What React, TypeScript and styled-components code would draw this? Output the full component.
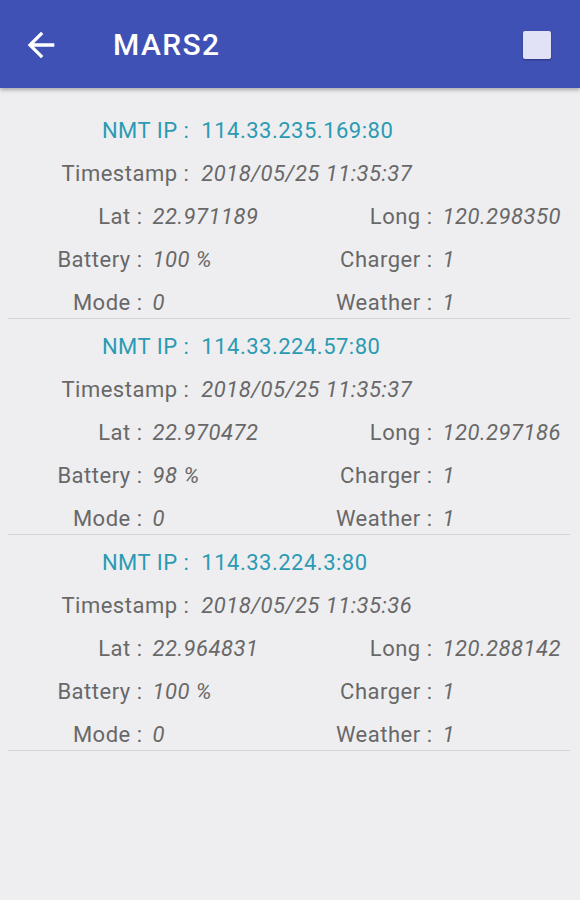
import React, { FC } from 'react';
import styled, { createGlobalStyle } from 'styled-components';

const BLUE = '#3f51b5';
const TEAL = '#2a9bb3';
const GREY = '#686868';

const GlobalStyle = createGlobalStyle`
  html, body {
    margin: 0;
    padding: 0;
    background-color: #eeeef0;
  }
  * {
    box-sizing: border-box;
    font-family: Roboto, "Noto Sans", sans-serif;
  }
`;

const Page = styled.div`
  width: 580px;
  min-height: 900px;
  background-color: #eeeef0;
`;

const Toolbar = styled.header`
  height: 88px;
  background-color: ${BLUE};
  display: flex;
  align-items: center;
  padding: 0 29px 0 21px;
  box-shadow: 0 2px 4px rgba(0, 0, 0, 0.3);
`;

const BackButton = styled.button`
  border: none;
  background: none;
  padding: 0;
  width: 40px;
  height: 40px;
  display: flex;
  margin-top: 2px;
  cursor: pointer;
`;

const Title = styled.h1`
  flex-grow: 1;
  margin: 0 0 0 52px;
  color: #fff;
  font-size: 30px;
  font-weight: 500;
  letter-spacing: 1.4px;
`;

const StopIcon = styled.div`
  width: 28px;
  height: 28px;
  border-radius: 2px;
  background-color: #e2e2f6;
  box-shadow: 0 1px 2px rgba(0, 0, 0, 0.35);
  margin-top: 2px;
`;

const List = styled.main`
  padding-top: 15px;
`;

const Card = styled.section`
  padding-top: 11px;
  margin: 0 10px 0 8px;
  border-bottom: 1px solid #d6d6d8;
  display: flex;
  flex-direction: column;
  gap: 11px;
`;

const Row = styled.div`
  height: 32px;
  display: flex;
  align-items: center;
  margin: 0 -10px 0 -8px;
`;

const Field = styled.div<{ $half?: boolean }>`
  flex: 1;
  display: flex;
  align-items: center;
  padding-left: ${(p) => (p.$half ? 5 : 0)}px;
  font-size: 22px;
  letter-spacing: 0.5px;
  & > span:first-child {
    flex: 1;
    padding-right: ${(p) => (p.$half ? 0 : 3)}px;
  }
  & > span:last-child {
    flex: ${(p) => (p.$half ? 1 : 2)};
    padding-left: ${(p) => (p.$half ? 10 : 9)}px;
  }
`;

const Label = styled.span<{ $accent?: boolean }>`
  text-align: right;
  color: ${(p) => (p.$accent ? TEAL : GREY)};
  white-space: nowrap;
`;

const Value = styled.span<{ $accent?: boolean }>`
  color: ${(p) => (p.$accent ? TEAL : GREY)};
  font-style: ${(p) => (p.$accent ? 'normal' : 'italic')};
  white-space: nowrap;
`;

type Record = {
  ip: string;
  timestamp: string;
  lat: string;
  long: string;
  battery: string;
  charger: string;
  mode: string;
  weather: string;
};

const records: Record[] = [
  {
    ip: '114.33.235.169:80',
    timestamp: '2018/05/25 11:35:37',
    lat: '22.971189',
    long: '120.298350',
    battery: '100 %',
    charger: '1',
    mode: '0',
    weather: '1',
  },
  {
    ip: '114.33.224.57:80',
    timestamp: '2018/05/25 11:35:37',
    lat: '22.970472',
    long: '120.297186',
    battery: '98 %',
    charger: '1',
    mode: '0',
    weather: '1',
  },
  {
    ip: '114.33.224.3:80',
    timestamp: '2018/05/25 11:35:36',
    lat: '22.964831',
    long: '120.288142',
    battery: '100 %',
    charger: '1',
    mode: '0',
    weather: '1',
  },
];

const Pair: FC<{ label: string; value: string }> = ({ label, value }) => (
  <Field $half>
    <Label>{label} :</Label>
    <Value>{value}</Value>
  </Field>
);

const RecordCard: FC<{ record: Record }> = ({ record }) => (
  <Card>
    <Row>
      <Field>
        <Label $accent>NMT IP :</Label>
        <Value $accent>{record.ip}</Value>
      </Field>
    </Row>
    <Row>
      <Field>
        <Label>Timestamp :</Label>
        <Value>{record.timestamp}</Value>
      </Field>
    </Row>
    <Row>
      <Pair label="Lat" value={record.lat} />
      <Pair label="Long" value={record.long} />
    </Row>
    <Row>
      <Pair label="Battery" value={record.battery} />
      <Pair label="Charger" value={record.charger} />
    </Row>
    <Row>
      <Pair label="Mode" value={record.mode} />
      <Pair label="Weather" value={record.weather} />
    </Row>
  </Card>
);

const App: FC = () => (
  <Page>
    <GlobalStyle />
    <Toolbar>
      <BackButton aria-label="back">
        <svg width="40" height="40" viewBox="0 0 24 24">
          <path fill="#fff" d="M20 11H7.83l5.59-5.59L12 4l-8 8 8 8 1.41-1.41L7.83 13H20v-2z" />
        </svg>
      </BackButton>
      <Title>MARS2</Title>
      <StopIcon />
    </Toolbar>
    <List>
      {records.map((r) => (
        <RecordCard key={r.ip} record={r} />
      ))}
    </List>
  </Page>
);

export default App;
